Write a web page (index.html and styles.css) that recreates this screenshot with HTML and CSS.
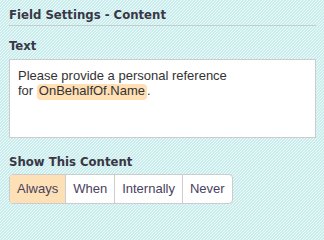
FILE: index.html
```html
<!DOCTYPE html>
<html>
<head>
<meta charset="utf-8">
<link rel="stylesheet" href="styles.css">
</head>
<body>
<div class="panel">
  <h1 class="title">Field Settings - Content</h1>
  <div class="label label-text">Text</div>
  <div class="textbox">Please provide a personal reference<br>for <span class="token">OnBehalfOf.Name</span>.</div>
  <div class="label label-show">Show This Content</div>
  <div class="segmented">
    <span class="seg active">Always</span>
    <span class="seg">When</span>
    <span class="seg">Internally</span>
    <span class="seg">Never</span>
  </div>
</div>
</body>
</html>
```
FILE: styles.css
```css
html {
  background: repeating-linear-gradient(135deg, #c9ecec 0px, #c9ecec 1.06px, #eef9f9 1.06px, #eef9f9 2.12px);
  min-height: 100%;
}
body {
  margin: 0;
  min-height: 212px;
}
.panel {
  padding: 0 8px 0 9px;
}
.title {
  margin: 0;
  padding: 7px 0 2px;
  font-family: "DejaVu Sans Condensed", sans-serif;
  font-weight: bold;
  font-size: 13px;
  line-height: 16px;
  color: #383746;
  border-bottom: 1px solid #c3cece;
}
.label {
  font-family: "DejaVu Sans Condensed", sans-serif;
  font-weight: bold;
  font-size: 13px;
  line-height: 16px;
  color: #383746;
}
.label-text {
  margin-top: 12px;
}
.textbox {
  margin-top: 5px;
  box-sizing: content-box;
  background: #fff;
  border: 1px solid #cccccc;
  padding: 8px 8px 0;
  height: 69px;
  font-family: "Liberation Sans", Arial, sans-serif;
  font-size: 13px;
  line-height: 15px;
  color: #333333;
}
.token {
  display: inline-block;
  background: #ffdfb3;
  border-radius: 4px;
  padding: 0 2px 2px;
  line-height: 14px;
}
.label-show {
  margin-top: 16px;
}
.segmented {
  margin-top: 4px;
  display: inline-flex;
  border: 1px solid #cccccc;
  border-radius: 4px;
  overflow: hidden;
  background: #fff;
}
.seg {
  padding: 0 7px;
  line-height: 28px;
  font-family: "Liberation Sans", Arial, sans-serif;
  font-size: 13px;
  color: #4a4160;
  border-left: 1px solid #cccccc;
}
.seg:first-child {
  border-left: none;
}
.seg.active {
  background: #fde0b6;
}
```
